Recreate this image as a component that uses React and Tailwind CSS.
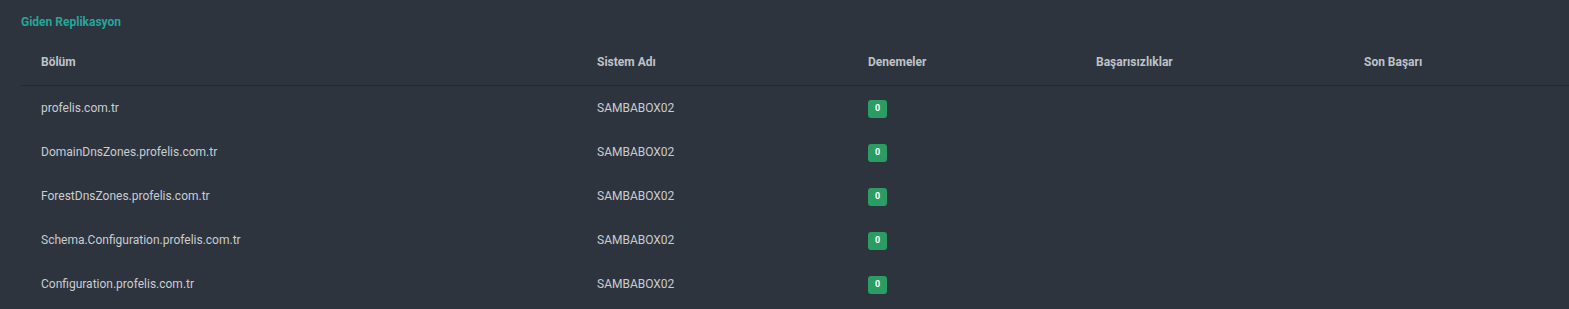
const rows = [
  'profelis.com.tr',
  'DomainDnsZones.profelis.com.tr',
  'ForestDnsZones.profelis.com.tr',
  'Schema.Configuration.profelis.com.tr',
  'Configuration.profelis.com.tr',
];

export default function App() {
  return (
    <div className="min-h-[309px] bg-[#2e343e] pt-[15px] pl-[21px] font-['Roboto',sans-serif]">
      <h3 className="text-[12px] font-bold leading-[14px] text-[#26a69a]">Giden Replikasyon</h3>
      <table className="mt-[16px] w-full table-fixed border-collapse text-left text-[12px]">
        <thead>
          <tr className="h-[40px] border-b border-[#242931] text-[#bfc2c7]">
            <th className="w-[556px] pl-[20px] pb-[6px] font-bold">Bölüm</th>
            <th className="w-[271px] pl-[20px] pb-[6px] font-bold">Sistem Adı</th>
            <th className="w-[228px] pl-[20px] pb-[6px] font-bold">Denemeler</th>
            <th className="w-[268px] pl-[20px] pb-[6px] font-bold">Başarısızlıklar</th>
            <th className="pl-[20px] pb-[6px] font-bold">Son Başarı</th>
          </tr>
        </thead>
        <tbody className="text-[#c9ccd1]">
          {rows.map((name) => (
            <tr key={name} className="h-[44px]">
              <td className="pl-[20px] pt-[1px]">{name}</td>
              <td className="pl-[20px] pt-[1px]">SAMBABOX02</td>
              <td className="pl-[20px] pt-[2px]">
                <span className="inline-flex h-[18px] w-[19px] items-center justify-center rounded-[3px] bg-[#2b9c63] text-[9px] font-bold text-white">
                  0
                </span>
              </td>
              <td />
              <td />
            </tr>
          ))}
        </tbody>
      </table>
    </div>
  );
}
